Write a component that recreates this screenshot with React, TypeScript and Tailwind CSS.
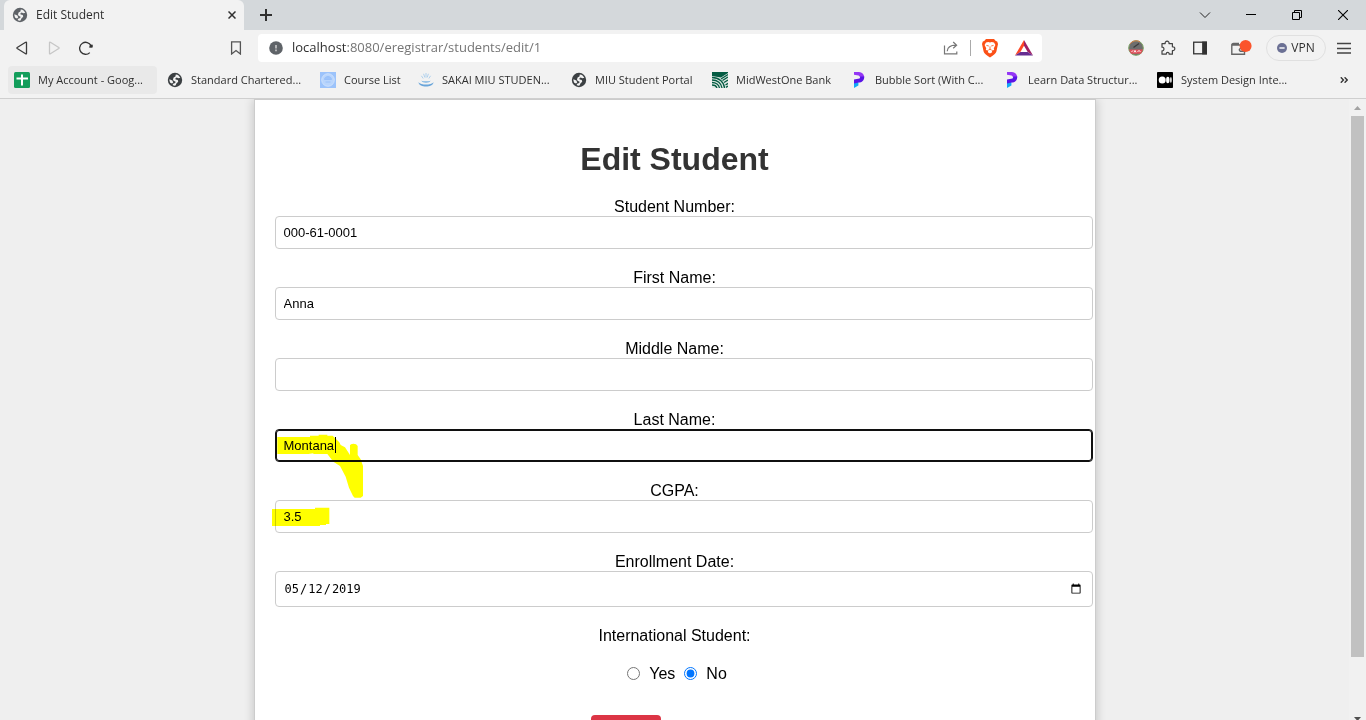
import type { ReactNode } from "react";

function Globe({ color = "#3c4043" }: { color?: string }) {
  return (
    <svg viewBox="0 0 16 16" className="size-4 shrink-0" aria-hidden="true">
      <circle cx="8" cy="8" r="7.2" fill={color} />
      <path
        d="M8.8 2.4C11 2.6 12.6 4 13.3 5.8L11.4 6.2 9.6 5.4 8.4 6.2 8.6 7.4 10.8 8 11.2 9.8 9.4 11.4 8.6 13.6C7.6 13.8 6.4 13.6 5.6 13L6.2 11.8 8.2 11 8.6 9.8 6.6 8.8 6 7.4 6.6 5.4 8.4 4.6Z"
        fill="#f2f2f2"
      />
      <path d="M2.4 7.2L5.4 8.6 6.2 10.4 5 11.4 3.2 10.8C2.6 9.8 2.3 8.4 2.4 7.2Z" fill="#f2f2f2" />
    </svg>
  );
}

function Sheets() {
  return (
    <svg viewBox="0 0 16 16" className="size-4 shrink-0" aria-hidden="true">
      <rect width="16" height="16" rx="1.5" fill="#129d5a" />
      <path d="M2.5 6.6H14M8 2.6V13.4" stroke="#fff" strokeWidth="2" />
    </svg>
  );
}

function CourseIcon() {
  return (
    <svg viewBox="0 0 16 16" className="size-4 shrink-0" aria-hidden="true">
      <rect width="16" height="16" fill="#9cc3fb" />
      <circle cx="8" cy="8" r="6.3" fill="#b9d5fc" stroke="#d3e4fd" strokeWidth="0.8" />
      <path d="M4.5 7.5C4.5 3.5 11.5 3.5 11.5 7.5ZM5.5 10H10.5" fill="#9cc3fb" stroke="#93bdf9" strokeWidth="0.8" />
    </svg>
  );
}

function SakaiIcon() {
  return (
    <svg viewBox="0 0 16 16" className="size-4 shrink-0" aria-hidden="true" fill="none">
      <path d="M5.2 6.5L3.4 3.8M6.8 5.5L5.6 1.8M8 5.5V1M9.2 5.5L10.4 1.8M10.8 6.5L12.6 3.8" stroke="#a8cdec" strokeWidth="0.9" />
      <path d="M3.4 8.4C4.2 11.4 11.8 11.4 12.6 8.4 11 9.6 5 9.6 3.4 8.4Z" fill="#7db4e2" />
      <path d="M.4 10.2C1.4 16 14.6 16 15.6 10.2 13 13.4 3 13.4 .4 10.2Z" fill="#69a5da" />
    </svg>
  );
}

function BankIcon() {
  return (
    <svg viewBox="0 0 16 16" className="size-4 shrink-0" aria-hidden="true" fill="none">
      <rect width="16" height="16" fill="#dfe9e5" />
      <path d="M0 0H16V1L9 5.5 0 4Z" fill="#045c43" />
      <path
        d="M0 5.5C7 5.5 12 10 12.5 16M0 8C5.5 8 9.5 11.5 10 16M0 10.5C4 10.5 7 13 7.5 16M0 13C2.5 13 4.5 14.5 5 16M9 7L16 2.5M10.5 8.5L16 5M12 10.5L16 8M13.5 13L16 11.4M14 15.4L16 14"
        stroke="#045c43"
        strokeWidth="1.3"
      />
    </svg>
  );
}

function ProgramizIcon() {
  return (
    <svg viewBox="0 0 16 16" className="size-4 shrink-0" aria-hidden="true">
      <path d="M3 8.6L7.4 9V13.4L3 16Z" fill="#12a8f5" />
      <path d="M3 0H8C11 .2 13 2 13.2 5L9.6 5.6 7.6 3.4 3 2.8Z" fill="#9436f5" />
      <path d="M3 7.4L8.6 6.4 9.4 4.4 13.3 4.6C13.2 8.6 11 10.6 7.6 10.6L3 11.4Z" fill="#5a14e6" />
    </svg>
  );
}

function MediumIcon() {
  return (
    <svg viewBox="0 0 16 16" className="size-4 shrink-0" aria-hidden="true" fill="#fff">
      <rect width="16" height="16" rx="0.8" fill="#000" />
      <circle cx="5.2" cy="8" r="3.5" />
      <ellipse cx="10.8" cy="8" rx="1.7" ry="3.2" />
      <ellipse cx="13.9" cy="8" rx="0.8" ry="3" />
    </svg>
  );
}

function BraveIcon() {
  return (
    <svg viewBox="0 0 18 20" className="h-5 w-[18px]" aria-hidden="true">
      <path d="M5 1H13L14.8 3 16.2 3.6 17 6 15.4 13.5C15 15.5 12 17.5 9 19.4 6 17.5 3 15.5 2.6 13.5L1 6 1.8 3.6 3.2 3Z" fill="#fb5017" />
      <path d="M5 4.4L7.4 4 9 4.6 10.6 4 13 4.4 14.4 7 12.8 10.2 13.2 12 10.8 12.6 11.2 14.2 9 15.6 6.8 14.2 7.2 12.6 4.8 12 5.2 10.2 3.6 7Z" fill="#fff" />
      <path d="M5.4 7.4L7.8 8M12.6 7.4L10.2 8M9 8.4V11.2M7.4 12L9 11.2 10.6 12" stroke="#fb5017" strokeWidth="0.8" fill="none" />
    </svg>
  );
}

function BatIcon() {
  return (
    <svg viewBox="0 0 18 16" className="h-4 w-[18px]" aria-hidden="true">
      <path d="M9 0L0 15.5 5.4 12 9 5.8Z" fill="#ff4724" />
      <path d="M9 0V5.8L12.7 12 18 15.5Z" fill="#9e1f63" />
      <path d="M0 15.5H18L12.7 12H5.4Z" fill="#662d91" />
    </svg>
  );
}

function IconButton({ label, children }: { label: string; children: ReactNode }) {
  return (
    <button type="button" aria-label={label} className="flex size-5 shrink-0 items-center justify-center">
      {children}
    </button>
  );
}

const bookmarks = [
  { text: "My Account - Goog...", icon: <Sheets />, size: "w-[149px] bg-[#e9e9e9]" },
  { text: "Standard Chartered...", icon: <Globe />, size: "w-[149px]" },
  { text: "Course List", icon: <CourseIcon />, size: "w-[94px]" },
  { text: "SAKAI MIU STUDEN...", icon: <SakaiIcon />, size: "w-[149px]" },
  { text: "MIU Student Portal", icon: <Globe />, size: "w-[137px]" },
  { text: "MidWestOne Bank", icon: <BankIcon />, size: "w-[135px]" },
  { text: "Bubble Sort (With C...", icon: <ProgramizIcon />, size: "w-[149px]" },
  { text: "Learn Data Structur...", icon: <ProgramizIcon />, size: "w-[149px]" },
  { text: "System Design Inte...", icon: <MediumIcon />, size: "w-[149px]" },
];

function TabStrip() {
  return (
    <div className="flex h-[30px] bg-[#d4d8db]">
      <div className="ml-1 flex w-60 items-center gap-2 rounded-t-md bg-[#f2f2f2] pr-[2px] pl-2">
        <Globe color="#5f6368" />
        <span className="flex-1 text-xs text-[#303030]">Edit Student</span>
        <IconButton label="Close tab">
          <svg viewBox="0 0 8 8" className="size-2" stroke="#303030" strokeWidth="1.5">
            <path d="M0.5 0.5L7.5 7.5M7.5 0.5L0.5 7.5" />
          </svg>
        </IconButton>
      </div>
      <div className="ml-3 flex flex-1 items-center">
        <IconButton label="New tab">
          <svg viewBox="0 0 12 12" className="size-3" stroke="#303030" strokeWidth="2">
            <path d="M6 0V12M0 6H12" />
          </svg>
        </IconButton>
      </div>
      <div className="flex items-center gap-[26px] pr-[13px]">
        <IconButton label="Search tabs">
          <svg viewBox="0 0 12 12" className="size-3" fill="none" stroke="#222">
            <path d="M1 3.5L6 8.5 11 3.5" />
          </svg>
        </IconButton>
        <IconButton label="Minimize">
          <svg viewBox="0 0 10 10" className="size-[10px]" stroke="#000">
            <path d="M0 4.5H10" />
          </svg>
        </IconButton>
        <IconButton label="Restore">
          <svg viewBox="0 0 10 10" className="size-[10px]" fill="none" stroke="#000">
            <path d="M.5 2.5H7.5V9.5H.5ZM2.5 2.5V.5H9.5V7.5H7.5" />
          </svg>
        </IconButton>
        <IconButton label="Close">
          <svg viewBox="0 0 10 10" className="size-[10px]" stroke="#000" strokeWidth="1.1">
            <path d="M0 0L10 10M10 0L0 10" />
          </svg>
        </IconButton>
      </div>
    </div>
  );
}

function Toolbar() {
  return (
    <div className="flex h-9 items-center">
      <div className="flex w-[258px] items-center gap-3 pl-3">
        <IconButton label="Back">
          <svg viewBox="0 0 12 14" className="h-[14px] w-3" fill="none" stroke="#3c3c3c" strokeWidth="1.3" strokeLinejoin="round">
            <path d="M10.5 1.6V12.4C10.5 13 10 13.1 9.6 12.8L1.2 7.5Q.6 7 1.2 6.5L9.6 1.2C10 .9 10.5 1 10.5 1.6Z" />
          </svg>
        </IconButton>
        <IconButton label="Forward">
          <svg viewBox="0 0 12 14" className="h-[14px] w-3" fill="none" stroke="#c6c6c6" strokeWidth="1.3" strokeLinejoin="round">
            <path d="M1.5 1.6V12.4C1.5 13 2 13.1 2.4 12.8L10.8 7.5Q11.4 7 10.8 6.5L2.4 1.2C2 .9 1.5 1 1.5 1.6Z" />
          </svg>
        </IconButton>
        <IconButton label="Reload">
          <svg viewBox="0 0 14 14" className="size-[14px]" fill="none" stroke="#333" strokeWidth="1.3">
            <path d="M10.8 11.6A6 6 0 1 1 12 4.6" />
            <path d="M13.6 3.4V6.4H9.8L11.4 4.6Z" fill="#333" stroke="none" />
            <circle cx="12" cy="5" r="1.5" fill="#333" stroke="none" />
          </svg>
        </IconButton>
        <span className="flex-1" />
        <span className="mr-3 flex">
          <IconButton label="Bookmark this tab">
            <svg viewBox="0 0 12 14" className="h-[14px] w-3" fill="none" stroke="#555" strokeWidth="1.3">
              <path d="M1.6 .8H10.4V13L6 9.6 1.6 13Z" />
            </svg>
          </IconButton>
        </span>
      </div>
      <div className="flex h-7 min-w-0 flex-1 items-center rounded-[4px] bg-white px-2">
        <svg viewBox="0 0 14 14" className="mx-[3px] size-[14px] shrink-0" aria-hidden="true">
          <circle cx="7" cy="7" r="6.8" fill="#5f6368" />
          <path d="M7 4V7.4M7 8.6V10.2" stroke="#d0d0d0" strokeWidth="1.5" />
        </svg>
        <p className="ml-[6px] flex-1 text-[13px] whitespace-nowrap text-[#757575]">
          <span className="text-[#303030]">localhost</span>:8080/eregistrar/students/edit/1
        </p>
        <IconButton label="Share">
          <svg viewBox="0 0 16 14" className="h-[14px] w-4" fill="none" stroke="#777" strokeWidth="1.2">
            <path d="M1.5 4.5V12.8H13.8V10.5M4.2 10.3C4.5 6.5 7 4.2 12.8 4.2M10.2 1L13.6 4.2 10.2 7.2" />
          </svg>
        </IconButton>
        <span className="mx-[9px] h-4 w-px bg-[#aaa]" />
        <IconButton label="Brave Shields"><BraveIcon /></IconButton>
        <span className="ml-[14px] flex"><IconButton label="Brave Rewards"><BatIcon /></IconButton></span>
      </div>
      <div className="flex w-[324px] items-center justify-end gap-2 pr-3">
        <div className="flex gap-3">
          <IconButton label="Recorder extension">
            <svg viewBox="0 0 16 16" className="size-4">
              <circle cx="8" cy="8" r="7.3" fill="#6e6e6e" stroke="#7ca262" />
              <path d="M2 4A7.4 7.4 0 0 1 12 1.8" stroke="#d17a4a" fill="none" />
              <path d="M5.5 7.5L11 3.4" stroke="#3c3c3c" strokeWidth="1.3" />
              <path d="M1 9.4H15L13 13.8H3Z" fill="#e0505a" />
              <path d="M3.5 12L5 10.4M6 12.4L7 10.4 8 12.4M9.5 12L11 10.4 12.5 12" stroke="#fff" fill="none" strokeWidth="0.9" />
            </svg>
          </IconButton>
          <IconButton label="Extensions">
            <svg viewBox="0 0 16 16" className="size-4" fill="none" stroke="#444" strokeWidth="1.2" strokeLinejoin="round">
              <path d="M2 3.6H5.2C4.4 .4 9.8 .4 9 3.6H12.4V6.8C15.6 6.2 15.6 11.2 12.4 10.6V14.2H9.2C9.4 11.8 6.2 11.8 6.2 14.2H2V10.8C4.6 11 4.6 7 2 7.2Z" />
            </svg>
          </IconButton>
          <IconButton label="Side panel">
            <svg viewBox="0 0 14 14" className="size-[14px]" fill="none" stroke="#333" strokeWidth="1.3">
              <rect x=".7" y="1.2" width="12.6" height="11.6" />
              <rect x="9.8" y="1.2" width="3.5" height="11.6" fill="#333" />
            </svg>
          </IconButton>
        </div>
        <span className="mr-[7px] ml-[13px] flex">
          <IconButton label="Wallet">
            <svg viewBox="0 0 22 17" className="h-[17px] w-[22px] shrink-0" fill="none" stroke="#666" strokeWidth="1.4">
              <path d="M14 5H1.8V14.2H14.5V9.5M1.8 5.5Q1.8 3.5 3.5 3.5H9" />
              <path d="M14.5 8.5H10.2Q8.4 9.8 10.2 11.2H14.5" />
              <circle cx="15.6" cy="6" r="6" fill="#fb542b" stroke="none" />
            </svg>
          </IconButton>
        </span>
        <button type="button" className="flex h-[26px] w-[60px] items-center justify-center gap-1 rounded-full border border-[#e0e0e0] text-xs text-[#303030]">
          <svg viewBox="0 0 10 10" className="size-[10px]" aria-hidden="true">
            <circle cx="5" cy="5" r="5" fill="#6b7094" />
            <path d="M2.4 5H7.6" stroke="#fff" strokeWidth="1.4" />
          </svg>
          VPN
        </button>
        <IconButton label="Menu">
          <svg viewBox="0 0 14 12" className="h-3 w-[14px]" stroke="#444" strokeWidth="1.3">
            <path d="M0 1.5H14M0 6.5H14M0 11H14" />
          </svg>
        </IconButton>
      </div>
    </div>
  );
}

function BookmarksBar() {
  return (
    <nav aria-label="Bookmarks" className="flex h-8 items-start gap-1 pl-2 text-[11px]">
      {bookmarks.map((b) => (
        <a key={b.text} href="#" className={`flex h-7 shrink-0 items-center gap-2 rounded-[4px] pl-[6px] whitespace-nowrap text-[#303030] ${b.size}`}>
          {b.icon}
          {b.text}
        </a>
      ))}
      <span className="flex h-7 flex-1 items-center justify-end pr-3">
        <IconButton label="More bookmarks">
          <svg viewBox="0 0 8 6" className="h-[6px] w-2" fill="none" stroke="#333" strokeWidth="1.4">
            <path d="M.8 .3L3.4 3 .8 5.7M4.6 .3L7.2 3 4.6 5.7" />
          </svg>
        </IconButton>
      </span>
    </nav>
  );
}

type FieldProps = {
  id: string;
  label: string;
  value: string;
  active?: boolean;
  children?: ReactNode;
};

function Field({ id, label, value, active = false, children }: FieldProps) {
  return (
    <div className="mb-5">
      <label htmlFor={id} className="block">{label}</label>
      <div className="relative">
        <input
          id={id}
          type="text"
          defaultValue={value}
          className={`box-content block h-[15px] w-full rounded-[4px] border p-2 text-[13px] leading-[15px] outline-none ${
            active ? "border-[#101010] ring-1 ring-[#101010] ring-inset" : "border-[#ccc]"
          }`}
        />
        {children}
      </div>
    </div>
  );
}

function Scrollbar() {
  return (
    <div className="flex w-[17px] shrink-0 flex-col items-center bg-[#f1f1f1]" aria-hidden="true">
      <svg viewBox="0 0 17 17" className="size-[17px] shrink-0">
        <path d="M5 11L8.5 7 12 11Z" fill="#a3a3a3" />
      </svg>
      <span className="w-[13px] grow-[541] bg-[#c1c1c1]" />
      <span className="grow-[59]" />
      <svg viewBox="0 0 17 4" className="h-1 w-[17px] shrink-0">
        <path d="M5 1H12L8.5 5Z" fill="#505050" />
      </svg>
    </div>
  );
}

export default function App() {
  return (
    <div className="flex h-screen flex-col overflow-hidden bg-[#efefef]">
      <header className="shrink-0 border-b border-[#cfcfcf] bg-[#f2f2f2] font-['Open_Sans',sans-serif]">
        <TabStrip />
        <Toolbar />
        <BookmarksBar />
      </header>
      <div className="flex min-h-0 flex-1">
        <main className="min-w-0 flex-1 overflow-hidden font-['Liberation_Sans',sans-serif] text-base leading-[18px] text-black">
          <form className="mx-auto max-w-[842px] border border-[#ccc] bg-white p-5 text-center shadow-[0_0_10px_rgba(0,0,0,0.2)]">
            <h1 className="mt-[21px] mb-5 text-[32px] leading-[37px] font-bold text-[#333]">Edit Student</h1>
            <Field id="student-number" label="Student Number:" value="000-61-0001" />
            <Field id="first-name" label="First Name:" value="Anna" />
            <Field id="middle-name" label="Middle Name:" value="" />
            <Field id="last-name" label="Last Name:" value="Montana" active>
              <svg viewBox="105 87 270 210" className="pointer-events-none absolute top-0 left-0 h-[70px] w-[90px] mix-blend-multiply" aria-hidden="true">
                <path
                  d="M112 111H210V107H236V104H262V107H278L298 127 302 135 315 142 330 165V136Q331 131 340 131 350 131 353 138V165L362 178 369 198V288L362 293H344L339 288 327 263 317 230 300 198 280 185 262 162H220V160L205 162H112Z"
                  fill="#ffff00"
                />
              </svg>
              <span className="absolute top-2 left-[60px] h-4 w-px bg-black" />
            </Field>
            <Field id="cgpa" label="CGPA:" value="3.5">
              <svg viewBox="96 300 180 90" className="pointer-events-none absolute top-0 -left-[3px] h-[30px] w-[60px] mix-blend-multiply" aria-hidden="true">
                <path d="M96 327H225V323H268V372H258V375H240V378H96Z" fill="#ffff00" />
              </svg>
            </Field>
            <div className="mb-5">
              <label htmlFor="enrollment-date" className="block">Enrollment Date:</label>
              <input
                id="enrollment-date"
                type="date"
                defaultValue="2019-05-12"
                className="box-content block h-[18px] w-full rounded-[4px] border border-[#ccc] p-2 font-['DejaVu_Sans_Mono',monospace] text-xs outline-none"
              />
            </div>
            <fieldset>
              <legend className="mx-auto">International Student:</legend>
              <div className="mt-5 flex items-center justify-center">
                <input id="intl-yes" type="radio" name="international" className="mr-[9px] mb-[2px] ml-[5px] size-[13px]" />
                <label htmlFor="intl-yes">Yes</label>
                <input id="intl-no" type="radio" name="international" defaultChecked className="mx-[9px] mb-[2px] size-[13px] accent-[#0075ff]" />
                <label htmlFor="intl-no">No</label>
              </div>
            </fieldset>
            <button type="submit" aria-label="Save" className="mt-8 mr-[98px] h-9 w-[70px] rounded-[4px] bg-[#dc3545]" />
          </form>
        </main>
        <Scrollbar />
      </div>
    </div>
  );
}
